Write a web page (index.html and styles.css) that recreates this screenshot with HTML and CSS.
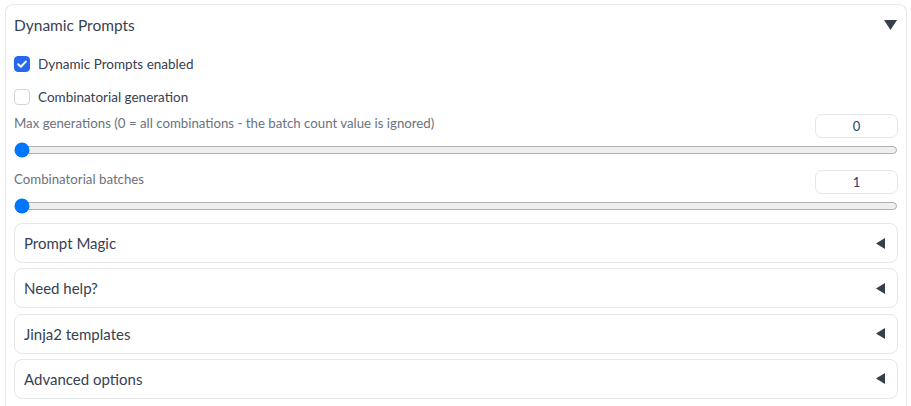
FILE: index.html
```html
<!DOCTYPE html>
<html>
<head>
<meta charset="utf-8">
<link rel="stylesheet" href="styles.css">
</head>
<body>
<div class="panel">
  <div class="panel-head">
    <span class="title">Dynamic Prompts</span>
    <svg class="arrow-down" width="13" height="10" viewBox="0 0 13 10"><polygon points="0,0 13,0 6.5,10" /></svg>
  </div>
  <label class="check-row first">
    <span class="box checked"><svg width="16" height="16" viewBox="0 0 16 16"><path d="M4.2 8.3 L6.9 10.8 L11.8 5.6" fill="none" stroke="#fff" stroke-width="2" stroke-linecap="round" stroke-linejoin="round"/></svg></span>
    <span class="check-label">Dynamic Prompts enabled</span>
  </label>
  <label class="check-row second">
    <span class="box"></span>
    <span class="check-label">Combinatorial generation</span>
  </label>
  <div class="slider-block first-slider">
    <div class="slider-head">
      <span class="slider-label">Max generations (0 = all combinations - the batch count value is ignored)</span>
      <div class="num">0</div>
    </div>
    <input class="range" type="range" min="0" max="1000" value="0">
  </div>
  <div class="slider-block second-slider">
    <div class="slider-head">
      <span class="slider-label">Combinatorial batches</span>
      <div class="num">1</div>
    </div>
    <input class="range" type="range" min="1" max="10" value="1">
  </div>
  <div class="subs">
    <div class="sub"><span class="sub-title">Prompt Magic</span><svg class="arrow-left" width="9" height="11" viewBox="0 0 9 11"><polygon points="9,0 9,11 0,5.5" /></svg></div>
    <div class="sub"><span class="sub-title">Need help?</span><svg class="arrow-left" width="9" height="11" viewBox="0 0 9 11"><polygon points="9,0 9,11 0,5.5" /></svg></div>
    <div class="sub"><span class="sub-title">Jinja2 templates</span><svg class="arrow-left" width="9" height="11" viewBox="0 0 9 11"><polygon points="9,0 9,11 0,5.5" /></svg></div>
    <div class="sub"><span class="sub-title">Advanced options</span><svg class="arrow-left" width="9" height="11" viewBox="0 0 9 11"><polygon points="9,0 9,11 0,5.5" /></svg></div>
  </div>
</div>
</body>
</html>
```
FILE: styles.css
```css
html, body {
  margin: 0;
  padding: 0;
  background: #ffffff;
  overflow: hidden;
}
body {
  font-family: "Lato", "Open Sans", "Liberation Sans", sans-serif;
  color: #374151;
}
.panel {
  margin: 4px 4px 0 5px;
  border: 1px solid #e5e7eb;
  border-bottom: none;
  border-radius: 8px 8px 0 0;
  padding: 0 8px 8px 8px;
  height: 420px;
  box-sizing: border-box;
}
.panel-head {
  display: flex;
  align-items: center;
  justify-content: space-between;
  height: 40px;
}
.title {
  font-size: 15.5px;
}
.arrow-down {
  fill: #373e4c;
  margin-right: 1px;
  margin-top: -1px;
}
.check-row {
  display: flex;
  align-items: center;
  height: 16px;
}
.check-row.first {
  margin-top: 11px;
}
.check-row.second {
  margin-top: 17px;
}
.box {
  width: 16px;
  height: 16px;
  box-sizing: border-box;
  border: 1px solid #d1d5db;
  border-radius: 4px;
  background: #fff;
  display: flex;
}
.box.checked {
  background: #2767ef;
  border-color: #2767ef;
}
.box.checked svg {
  margin: -1px;
}
.check-label {
  margin-left: 8px;
  font-size: 13.5px;
  color: #374151;
}
.slider-block {
  display: flex;
  flex-direction: column;
}
.first-slider {
  margin-top: 9px;
}
.second-slider {
  margin-top: 12px;
}
.slider-head {
  display: flex;
  align-items: center;
  justify-content: space-between;
  height: 24px;
}
.slider-label {
  font-size: 13.25px;
  color: #6b7280;
  margin-top: -6px;
}
.num {
  width: 83px;
  height: 24px;
  box-sizing: border-box;
  border: 1px solid #e5e7eb;
  border-radius: 7px;
  display: flex;
  align-items: center;
  justify-content: center;
  font-size: 13px;
  color: #1f4274;
}
.range {
  display: block;
  width: 100%;
  margin: 4px 0 0 0;
  height: 16px;
}
.subs {
  display: flex;
  flex-direction: column;
  gap: 5.33px;
  margin-top: 9px;
}
.sub {
  height: 40px;
  box-sizing: border-box;
  border: 1px solid #e5e7eb;
  border-radius: 8px;
  display: flex;
  align-items: center;
  justify-content: space-between;
  padding: 0 12px 0 9px;
}
.sub-title {
  font-size: 15px;
  color: #374151;
}
.arrow-left {
  fill: #373e4c;
}
```
